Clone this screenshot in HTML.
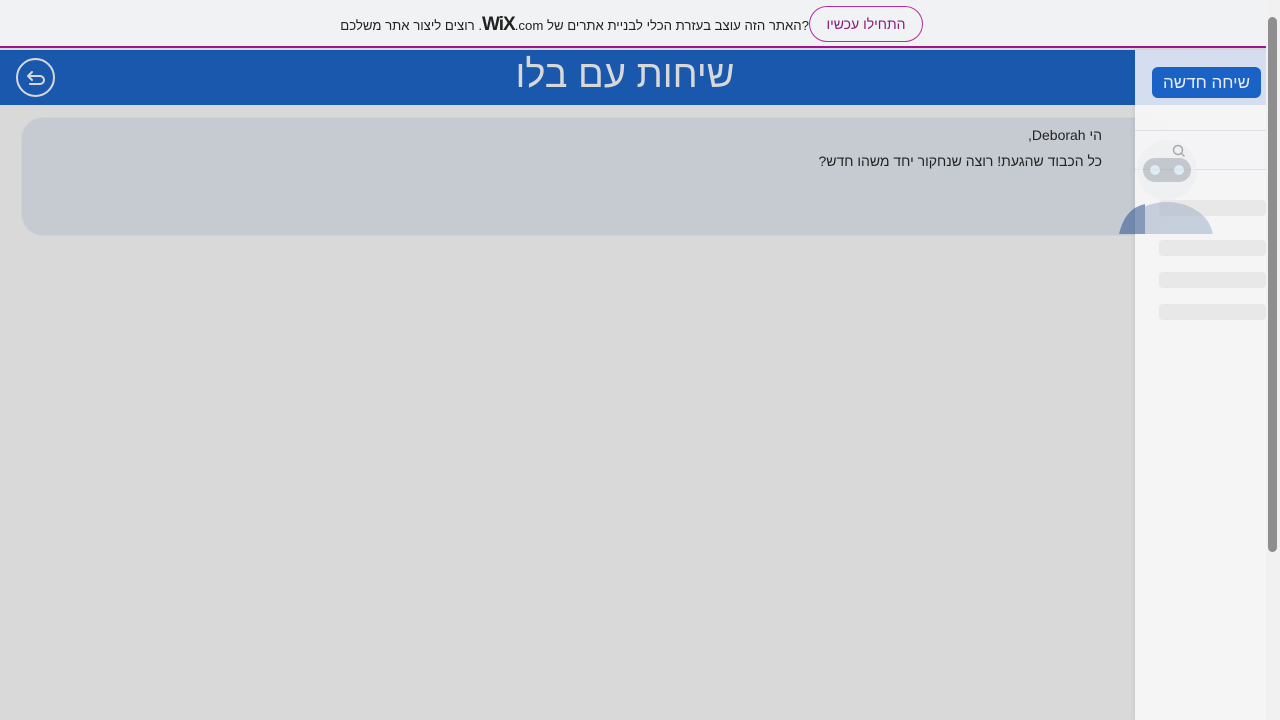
<!DOCTYPE html>
<html><head><meta charset="utf-8"><style>
*{margin:0;padding:0;box-sizing:border-box}
body{width:1280px;height:720px;overflow:hidden;background:#d9d9d9;font-family:"Liberation Sans","Noto Sans CJK SC",sans-serif;position:relative}
.top{position:absolute;left:0;top:0;width:1266px;height:48px;background:#f1f2f4;border-bottom:2px solid #a2148f}
.top .txt{position:absolute;right:457px;top:14px;font-size:13.2px;color:#222;direction:rtl;white-space:nowrap}
.top .wix{font-weight:bold;font-size:19px;letter-spacing:-1px}
.btn{position:absolute;left:809px;top:6px;width:114px;height:36px;border:1px solid #b12fa0;border-radius:18px;color:#8a1a7c;font-size:14px;text-align:center;line-height:34px;background:#f1f2f4}
.hdr{position:absolute;left:0;top:50px;width:1266px;height:55px;background:#1a58ae}
.hdr h1{position:absolute;left:0;width:1250px;text-align:center;top:4px;font-size:38px;color:#d8d8d8;font-weight:normal;direction:rtl}
.back{position:absolute;left:16px;top:58px;width:39px;height:39px;border:2px solid #d8d8d8;border-radius:50%}
.card{position:absolute;left:21px;top:117px;width:1150px;height:119px;background:#c6cad1;border:1px solid #cfd3d9;border-radius:22px}
.card p{position:absolute;right:68px;font-size:14px;color:#222;direction:rtl;white-space:nowrap}
.side{position:absolute;left:1135px;top:50px;width:131px;height:670px;background:rgba(247,247,247,.94);box-shadow:-2px 0 4px rgba(0,0,0,.06)}
.side .tp{position:absolute;left:0;top:0;width:131px;height:55px;background:rgba(211,221,238,.95)}
.nb{position:absolute;left:17px;top:17px;width:109px;height:31px;background:#1b62c7;border-radius:6px;color:#e8eef8;font-size:17px;text-align:center;line-height:31px;direction:rtl}
.srch{position:absolute;left:0;top:80px;width:131px;height:40px;border-top:1px solid #e0e0e0;border-bottom:1px solid #e0e0e0;background:rgba(243,244,246,.6)}
.bar{position:absolute;left:24px;width:107px;height:16px;background:#e8e8e8;border-radius:4px}
.sb{position:absolute;left:1266px;top:0;width:14px;height:720px;background:#f1f1f1}
.th{position:absolute;left:1268px;top:17px;width:9px;height:535px;background:#8e8e8e;border-radius:5px}
</style></head><body>
<div class="top">
<div class="txt">?האתר הזה עוצב בעזרת הכלי לבניית אתרים של <span class="wix">WiX</span>.com. רוצים ליצור אתר משלכם</div>
<div class="btn">התחילו עכשיו</div>
</div>
<div class="hdr"><h1>שיחות עם בלו</h1></div>
<div class="back"><svg width="35" height="35" viewBox="0 0 35 35" fill="none" stroke="#d8d8d8" stroke-width="2" stroke-linecap="round" stroke-linejoin="round"><path d="M10 16h12a4 4 0 0 1 0 8h-10M10 16l4-4M10 16l4 4"/></svg></div>
<div class="card">
<p style="top:9px">הי Deborah,</p>
<p style="top:35px">כל הכבוד שהגעת! רוצה שנחקור יחד משהו חדש?</p>
</div>
<div class="side">
<div class="tp"></div>
<div class="nb">שיחה חדשה</div>
<div class="srch"><svg style="position:absolute;left:36px;top:12px" width="16" height="16" viewBox="0 0 16 16" fill="none" stroke="#444" stroke-width="1.5"><circle cx="7" cy="7" r="4.5"/><path d="M10.5 10.5l3 3"/></svg></div>
<div class="bar" style="top:150px"></div>
<div class="bar" style="top:190px"></div>
<div class="bar" style="top:222px"></div>
<div class="bar" style="top:254px"></div>
</div>
<svg style="position:absolute;left:1115px;top:128px;opacity:.6" width="110" height="106" viewBox="0 0 110 106"><ellipse cx="52" cy="110" rx="46" ry="36" fill="#a8b6cc"/><path d="M4 106 Q10 80 30 76 L30 106Z" fill="#3c5f95"/><circle cx="52" cy="42" r="30" fill="#eceef1"/><rect x="28" y="30" width="48" height="24" rx="12" fill="#a4abb4"/><circle cx="40" cy="42" r="5" fill="#cfe8f5"/><circle cx="64" cy="42" r="5" fill="#cfe8f5"/></svg>
<div class="sb"></div><div class="th"></div>
</body></html>
